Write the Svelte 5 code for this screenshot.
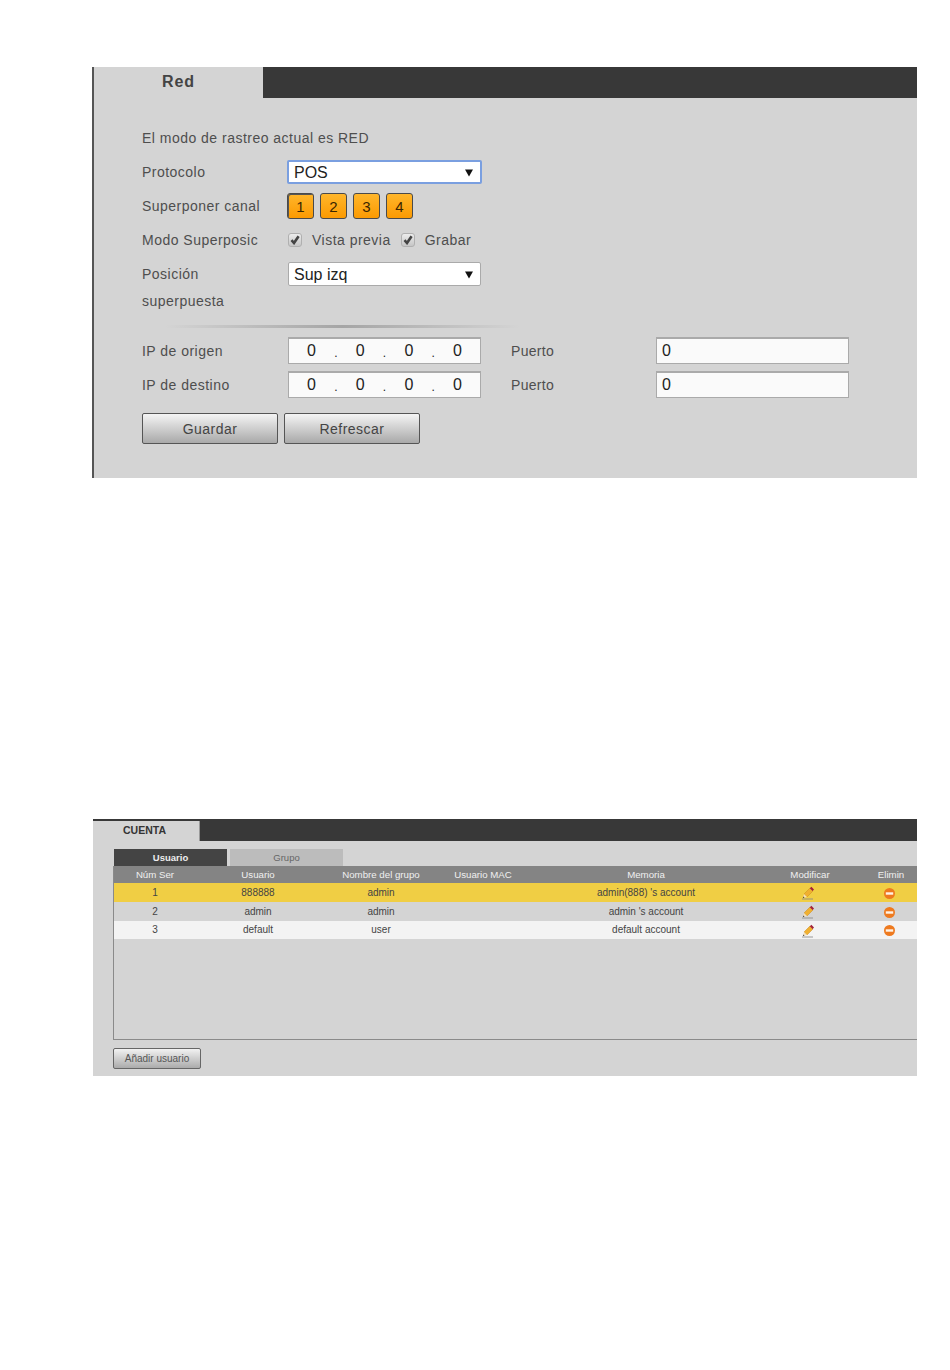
<script>
  const rows = [
    { id: 1, user: '888888', group: 'admin', memo: "admin(888) 's account", selected: true },
    { id: 2, user: 'admin', group: 'admin', memo: "admin 's account" },
    { id: 3, user: 'default', group: 'user', memo: 'default account', light: true }
  ];
  const channels = [1, 2, 3, 4];
  const columns = ['Núm Ser', 'Usuario', 'Nombre del grupo', 'Usuario MAC', 'Memoria', 'Modificar', 'Elimin'];
  const ips = ['IP de origen', 'IP de destino'];
</script>

{#snippet arrow()}
  <svg class="arrow" width="8" height="8" viewBox="0 0 8 8"><path d="M0 0.5H8L4 7.5Z" fill="#111" /></svg>
{/snippet}

{#snippet check()}
  <span class="check">
    <svg width="10" height="10" viewBox="0 0 10 10"><path d="M1.5 5.2L4 8L8.6 1.2" fill="none" stroke="#444" stroke-width="2.6" /></svg>
  </span>
{/snippet}

<div class="page">
  <section class="panel red">
    <header class="bar"><div class="tab">Red</div></header>
    <div class="form">
      <div class="row">El modo de rastreo actual es RED</div>
      <div class="row field">
        <span>Protocolo</span>
        <div class="select focus">POS {@render arrow()}</div>
      </div>
      <div class="row field">
        <span>Superponer canal</span>
        <div class="channels">
          {#each channels as ch}
            <button class="channel" class:first={ch === 1}>{ch}</button>
          {/each}
        </div>
      </div>
      <div class="row field">
        <span>Modo Superposic</span>
        <div class="checks">
          {@render check()}<span class="check-label">Vista previa</span>
          {@render check()}<span class="check-label">Grabar</span>
        </div>
      </div>
      <div class="row field tall">
        <span class="two-line">Posición<br />superpuesta</span>
        <div class="select">Sup izq {@render arrow()}</div>
      </div>
      <div class="divider"></div>
      {#each ips as label}
        <div class="row ip-row">
          <span>{label}</span>
          <div class="input ip">
            <b>0</b><i>.</i><b>0</b><i>.</i><b>0</b><i>.</i><b>0</b>
          </div>
          <span class="port">Puerto</span>
          <div class="input">0</div>
        </div>
      {/each}
      <div class="actions">
        <button class="action">Guardar</button>
        <button class="action">Refrescar</button>
      </div>
    </div>
  </section>

  <section class="panel account">
    <header class="bar small"><div class="tab">CUENTA</div></header>
    <div class="content">
      <div class="subtabs">
        <div class="subtab on">Usuario</div>
        <div class="subtab">Grupo</div>
      </div>
      <div class="table-box">
        <table>
          <colgroup>
            <col style="width:82px" /><col style="width:124px" /><col style="width:122px" /><col style="width:82px" />
            <col style="width:244px" /><col style="width:84px" /><col style="width:78px" />
          </colgroup>
          <thead>
            <tr>
              {#each columns as c}<th>{c}</th>{/each}
            </tr>
          </thead>
          <tbody>
            {#each rows as r}
              <tr class:selected={r.selected} class:light={r.light}>
                <td>{r.id}</td>
                <td>{r.user}</td>
                <td>{r.group}</td>
                <td></td>
                <td>{r.memo}</td>
                <td>
                  <svg class="icon edit" width="14" height="14" viewBox="0 0 14 14">
                    <path d="M1 13H12" stroke="#8a8a8a" stroke-width="1.2" opacity="0.7" />
                    <path d="M3 8L9 2L12 5L6 11Z" fill="#f0b030" stroke="#c98a1c" stroke-width="0.5" />
                    <path d="M8.8 2.2L10.4 0.8L13 3.4L11.6 5Z" fill="#a3233a" />
                    <path d="M3 8L2 12L6 11Z" fill="#f5e0b8" />
                    <path d="M2.4 10.6L2 12L3.5 11.6Z" fill="#222" />
                  </svg>
                </td>
                <td>
                  <svg class="icon del" width="11" height="11" viewBox="0 0 11 11">
                    <circle cx="5.5" cy="5.5" r="5.5" fill="#ee7a1f" />
                    <rect x="1.8" y="4.3" width="7.4" height="2.4" fill="#fff3e6" />
                  </svg>
                </td>
              </tr>
            {/each}
          </tbody>
        </table>
      </div>
      <button class="add">Añadir usuario</button>
    </div>
  </section>
</div>

<style>
  :global(body) {
    margin: 0;
    background: #fff;
  }

  .page {
    width: 950px;
    height: 1370px;
    padding: 67px 0 0 92px;
    box-sizing: border-box;
    font-family: "Liberation Sans", Arial, sans-serif;
    overflow: hidden;
  }

  .panel {
    background: #d4d4d4;
    box-sizing: border-box;
    overflow: hidden;
  }

  .panel.red {
    width: 825px;
    height: 411px;
    border-left: 2px solid #555;
  }

  .panel.account {
    width: 824px;
    height: 257px;
    margin: 341px 0 0 1px;
  }

  .bar {
    height: 31px;
    background: #383838;
    display: flex;
  }

  .tab {
    width: 169px;
    background: #d4d4d4;
    color: #444;
    font-size: 16px;
    font-weight: bold;
    letter-spacing: 0.9px;
    padding: 6px 0 0 68px;
    box-sizing: border-box;
  }

  .bar.small {
    height: 22px;
  }

  .bar.small .tab {
    width: 107px;
    margin-top: 2px;
    padding: 3px 0 0 30px;
    font-size: 10.5px;
    letter-spacing: 0;
    color: #333;
    border-right: 1px solid #999;
  }

  .form {
    padding: 23px 0 0 48px;
    color: #4e4e4e;
    font-size: 14px;
    letter-spacing: 0.48px;
  }

  .row {
    height: 34px;
    display: flex;
    align-items: center;
  }

  .field > span:first-child {
    width: 146px;
    white-space: nowrap;
  }

  .field.tall {
    height: 62px;
    align-items: flex-start;
    padding-top: 4px;
    box-sizing: border-box;
  }

  .two-line {
    line-height: 27px;
  }

  .select {
    width: 193px;
    height: 24px;
    margin-top: 1px;
    box-sizing: border-box;
    background: #fff;
    border: 1px solid #aaa;
    border-radius: 2px;
    color: #222;
    font-size: 16px;
    letter-spacing: 0;
    padding: 1px 7px 0 5px;
    display: flex;
    align-items: center;
    justify-content: space-between;
  }

  .select.focus {
    width: 195px;
    margin: 0 0 0 -1px;
    border: 2px solid #7a9fe0;
    padding-left: 5px;
    padding-right: 7px;
  }

  .arrow {
    flex: none;
  }

  .channels {
    display: flex;
    gap: 6px;
    margin-left: -1px;
  }

  .channel {
    width: 27px;
    height: 26px;
    padding: 0;
    border: 1px solid #4a4a4a;
    border-radius: 3px;
    background: linear-gradient(#ffb62b, #fb9a02);
    color: #3a2500;
    font-family: inherit;
    font-size: 15px;
  }

  .channel.first {
    box-shadow: inset 1px 1px 0 #555;
  }

  .checks {
    display: flex;
    align-items: center;
  }

  .check {
    width: 14px;
    height: 14px;
    box-sizing: border-box;
    border: 1px solid #b0b0b0;
    border-radius: 3px;
    background: linear-gradient(#ececec, #c6c6c6);
    display: flex;
    align-items: center;
    justify-content: center;
  }

  .check-label {
    margin: 0 10px 0 10px;
  }

  .divider {
    width: 355px;
    height: 3px;
    margin: 6px 0 6px 23px;
    background: linear-gradient(90deg, transparent, #a5a5a5 50%, transparent);
  }

  .ip-row > span:first-child {
    width: 146px;
  }

  .input {
    width: 193px;
    height: 27px;
    margin-top: -1px;
    box-sizing: border-box;
    background: #fafafa;
    border: 1px solid #aaa;
    border-top-width: 2px;
    color: #222;
    font-size: 16px;
    letter-spacing: 0;
    padding-left: 5px;
    display: flex;
    align-items: center;
  }

  .ip {
    padding: 0 18px;
    justify-content: space-between;
  }

  .ip b {
    font-weight: normal;
  }

  .ip i {
    font-style: normal;
    font-size: 12px;
    padding-top: 4px;
  }

  .port {
    width: 145px;
    margin-left: 30px;
    letter-spacing: 0.3px;
  }

  .actions {
    display: flex;
    gap: 6px;
    margin-top: 11px;
  }

  .action {
    width: 136px;
    height: 31px;
    padding: 0;
    border: 1px solid #555;
    border-radius: 2px;
    background: linear-gradient(#f4f4f4, #a9a9a9);
    color: #444;
    font-family: inherit;
    font-size: 14px;
    letter-spacing: 0.48px;
  }

  .content {
    padding: 8px 0 0 20px;
  }

  .subtabs {
    display: flex;
    gap: 3px;
    margin-left: 1px;
  }

  .subtab {
    width: 113px;
    height: 17px;
    background: #bcbcbc;
    color: #666;
    font-size: 9.5px;
    text-align: center;
    line-height: 18px;
  }

  .subtab.on {
    background: #444;
    color: #eee;
    font-weight: bold;
  }

  .table-box {
    width: 811px;
    height: 174px;
    box-sizing: border-box;
    border-left: 1px solid #8a8a8a;
    border-bottom: 1px solid #8a8a8a;
    overflow: hidden;
  }

  table {
    width: 816px;
    table-layout: fixed;
    border-collapse: collapse;
    font-size: 10px;
    color: #444;
  }

  th {
    height: 17px;
    padding: 0;
    background: #848484;
    color: #f0f0f0;
    font-size: 9.7px;
    font-weight: normal;
    white-space: nowrap;
  }

  td {
    height: 18px;
    padding: 0 0 1px;
    text-align: center;
    white-space: nowrap;
  }

  tr.selected td {
    background: #f0ce44;
  }

  tr.light td {
    height: 17px;
    background: #f3f3f3;
  }

  .icon {
    display: block;
    margin-top: 2px;
  }

  .icon.edit {
    margin-left: 33px;
  }

  .icon.del {
    margin-left: 32px;
  }

  .add {
    width: 88px;
    height: 21px;
    margin-top: 8px;
    padding: 0;
    border: 1px solid #666;
    border-radius: 2px;
    background: linear-gradient(#f2f2f2, #ababab);
    color: #555;
    font-family: inherit;
    font-size: 10px;
  }
</style>
